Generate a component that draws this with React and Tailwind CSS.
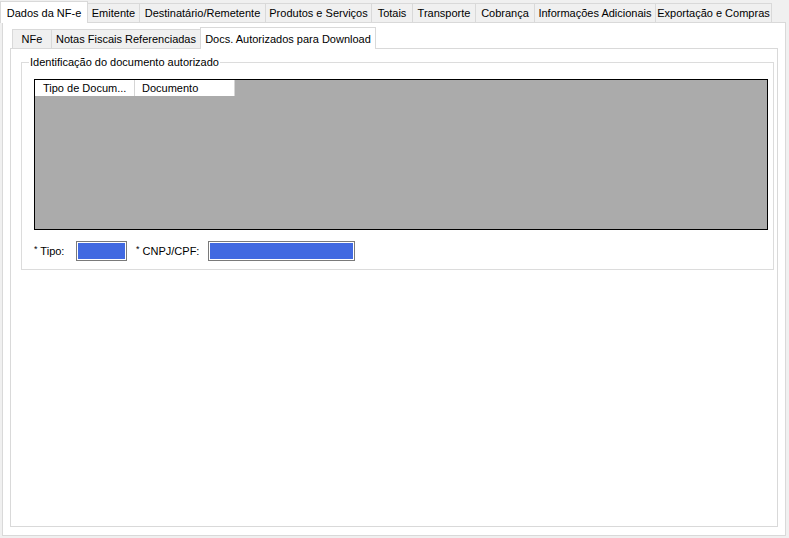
import React from 'react';

const OUTER_TABS = [
  { label: 'Emitente', w: 52 },
  { label: 'Destinatário/Remetente', w: 126 },
  { label: 'Produtos e Serviços', w: 106 },
  { label: 'Totais', w: 41 },
  { label: 'Transporte', w: 63 },
  { label: 'Cobrança', w: 59 },
  { label: 'Informações Adicionais', w: 121 },
  { label: 'Exportação e Compras', w: 116 },
];

const INNER_TABS = [
  { label: 'NFe', w: 40 },
  { label: 'Notas Fiscais Referenciadas', w: 149 },
];

// unselected tab in a WinForms tab strip
const Tab = ({ label, w }) => (
  <div
    className="h-[19px] flex items-center justify-center bg-[#f0f0f0] border border-b-0 border-l-0 border-[#d9d9d9] whitespace-nowrap"
    style={{ width: w }}
  >
    {label}
  </div>
);

const BlueBox = ({ w }) => (
  <div className="h-[20px] border border-[#7a7a7a] bg-white p-[1px]" style={{ width: w }}>
    <div className="w-full h-full bg-[#4169e1]" />
  </div>
);

export default function App() {
  return (
    <div
      className="w-[789px] h-[538px] bg-[#f0f0f0] text-[11px] leading-[14px] text-black overflow-hidden"
      style={{ fontFamily: '"Liberation Sans", Arial, sans-serif' }}
    >
      {/* outer tab strip */}
      <div className="flex items-end h-[22px]">
        <div className="w-[88px] h-[22px] flex items-start pt-[4px] justify-center bg-white border border-b-0 border-[#d9d9d9] relative z-10 -mb-[1px]">
          Dados da NF-e
        </div>
        {OUTER_TABS.map(t => (
          <Tab key={t.label} {...t} />
        ))}
      </div>

      {/* outer tab page */}
      <div className="ml-[2px] w-[784px] h-[514px] bg-white border border-[#d9d9d9] pl-[7px] pt-[3px]">
        {/* inner tab strip */}
        <div className="flex items-end h-[22px] pl-[2px]">
          {INNER_TABS.map((t, i) => (
            <div
              key={t.label}
              className={`h-[19px] flex items-center justify-center bg-[#f0f0f0] border border-b-0 border-[#d9d9d9] whitespace-nowrap ${i > 0 ? 'border-l-0' : ''}`}
              style={{ width: t.w }}
            >
              {t.label}
            </div>
          ))}
          <div className="w-[176px] h-[22px] flex items-start pt-[4px] justify-center bg-white border border-b-0 border-[#d9d9d9] relative z-10 -mb-[1px] -ml-[1px] whitespace-nowrap">
            Docs. Autorizados para Download
          </div>
        </div>

        {/* inner tab page */}
        <div className="w-[768px] h-[479px] border border-[#d9d9d9] bg-white pl-[10px] pt-[6px]">
          <fieldset className="w-[753px] h-[215px] border border-[#dcdcdc] pl-[12px] pr-[5px] m-0">
            <legend className="-ml-[5px] px-[1px] leading-[14px]">Identificação do documento autorizado</legend>

            {/* data grid */}
            <div className="mt-[10px] w-[734px] h-[151px] border border-black bg-[#ababab]">
              <div className="flex h-[16px] bg-[#ababab]">
                <div className="w-[100px] h-full bg-white border-r border-[#d5d5d5] pl-[8px] flex items-center whitespace-nowrap">
                  Tipo de Docum...
                </div>
                <div className="w-[100px] h-full bg-white border-r border-[#d5d5d5] pl-[7px] flex items-center">
                  Documento
                </div>
              </div>
            </div>

            {/* fields */}
            <div className="flex items-center mt-[11px] h-[20px]">
              <span className="w-[42px] whitespace-nowrap"><sup className="text-[9px] top-[-3px]">*</sup> Tipo:</span>
              <BlueBox w={51} />
              <span className="ml-[9px] w-[72px] whitespace-nowrap"><sup className="text-[9px] top-[-3px]">*</sup> CNPJ/CPF:</span>
              <BlueBox w={147} />
            </div>
          </fieldset>
        </div>
      </div>
    </div>
  );
}
